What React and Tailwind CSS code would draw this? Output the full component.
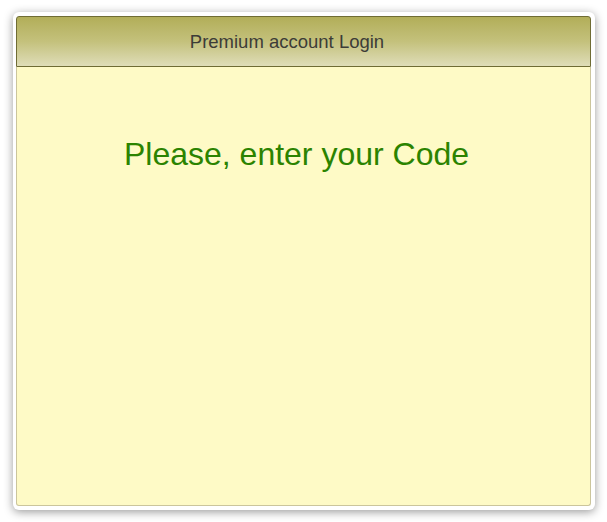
export default function App() {
  return (
    <div className="w-[607px] h-[522px] bg-white overflow-hidden" style={{ fontFamily: '"Liberation Sans", Arial, sans-serif' }}>
      <div className="ml-[13px] mt-[12px] w-[582px] h-[498px] bg-white rounded-[6px] shadow-[0_2px_10px_rgba(0,0,0,0.4)] pt-[4px] pl-[3px] pr-[4px] pb-[4px]">
        <div className="flex flex-col w-[575px] h-[490px]">
          <div className="h-[51px] shrink-0 flex items-center justify-center pr-[33px] pt-[2px] border border-[#6f6c34] rounded-t-[3px] bg-gradient-to-b from-[#b2ae58] via-[#c4c17c] to-[#dfddb8]">
            <span className="text-[18.5px] leading-none text-[#3c3c38]">Premium account Login</span>
          </div>
          <div className="flex-1 border-x border-b border-[#cbc59c] rounded-b-[3px] bg-[#fefac6] flex flex-col items-center pr-[14px]">
            <div className="mt-[71px] text-[32px] leading-none text-[#2b8300]">Please, enter your Code</div>
          </div>
        </div>
      </div>
    </div>
  );
}
